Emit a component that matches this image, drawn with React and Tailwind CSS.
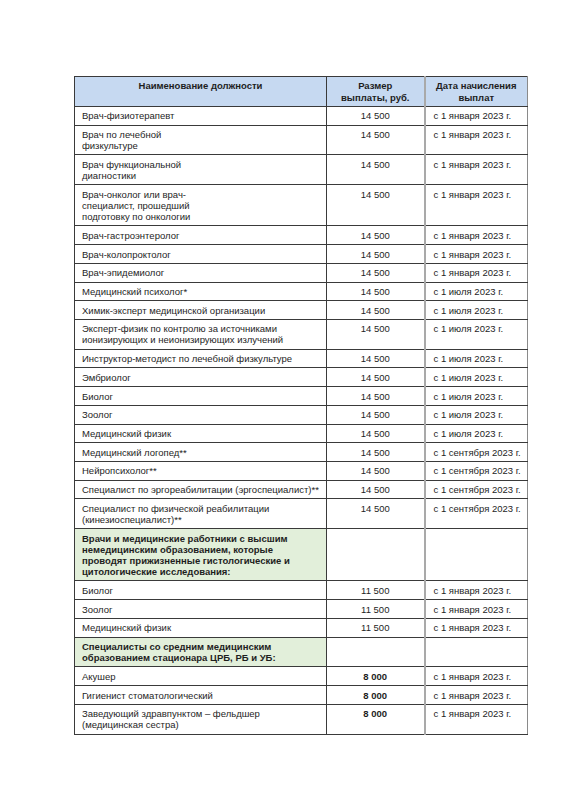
import React from "react";

const rows = [
  { t: ["Врач-физиотерапевт"], v: "14 500", d: "с 1 января 2023 г." },
  { t: ["Врач по лечебной", "физкультуре"], v: "14 500", d: "с 1 января 2023 г." },
  { t: ["Врач функциональной", "диагностики"], v: "14 500", d: "с 1 января 2023 г." },
  { t: ["Врач-онколог или врач-", "специалист, прошедший", "подготовку по онкологии"], v: "14 500", d: "с 1 января 2023 г." },
  { t: ["Врач-гастроэнтеролог"], v: "14 500", d: "с 1 января 2023 г." },
  { t: ["Врач-колопроктолог"], v: "14 500", d: "с 1 января 2023 г." },
  { t: ["Врач-эпидемиолог"], v: "14 500", d: "с 1 января 2023 г." },
  { t: ["Медицинский психолог*"], v: "14 500", d: "с 1 июля 2023 г." },
  { t: ["Химик-эксперт медицинской организации"], v: "14 500", d: "с 1 июля 2023 г." },
  { t: ["Эксперт-физик по контролю за источниками", "ионизирующих и неионизирующих излучений"], v: "14 500", d: "с 1 июля 2023 г." },
  { t: ["Инструктор-методист по лечебной физкультуре"], v: "14 500", d: "с 1 июля 2023 г." },
  { t: ["Эмбриолог"], v: "14 500", d: "с 1 июля 2023 г." },
  { t: ["Биолог"], v: "14 500", d: "с 1 июля 2023 г." },
  { t: ["Зоолог"], v: "14 500", d: "с 1 июля 2023 г." },
  { t: ["Медицинский физик"], v: "14 500", d: "с 1 июля 2023 г." },
  { t: ["Медицинский логопед**"], v: "14 500", d: "с 1 сентября 2023 г." },
  { t: ["Нейропсихолог**"], v: "14 500", d: "с 1 сентября 2023 г." },
  { t: ["Специалист по эргореабилитации (эргоспециалист)**"], v: "14 500", d: "с 1 сентября 2023 г." },
  { t: ["Специалист по физической реабилитации", "(кинезиоспециалист)**"], v: "14 500", d: "с 1 сентября 2023 г." },
  { section: true, t: ["Врачи и медицинские работники с высшим", "немедицинским образованием, которые", "проводят прижизненные гистологические и", "цитологические исследования:"] },
  { t: ["Биолог"], v: "11 500", d: "с 1 января 2023 г." },
  { t: ["Зоолог"], v: "11 500", d: "с 1 января 2023 г." },
  { t: ["Медицинский физик"], v: "11 500", d: "с 1 января 2023 г." },
  { section: true, t: ["Специалисты со средним медицинским", "образованием стационара ЦРБ, РБ и УБ:"] },
  { t: ["Акушер"], v: "8 000", d: "с 1 января 2023 г.", bold: true },
  { t: ["Гигиенист стоматологический"], v: "8 000", d: "с 1 января 2023 г.", bold: true },
  { t: ["Заведующий здравпунктом – фельдшер", "(медицинская сестра)"], v: "8 000", d: "с 1 января 2023 г.", bold: true },
];

const cell = "pt-[3.4px] pb-[3.1px] leading-[11.2px] align-top border-b border-[#3a3a3a]";

export default function App() {
  return (
    <div className="w-[566px] h-[800px] bg-white pt-[76px] pl-[74px]" style={{ fontFamily: '"Liberation Sans", Arial, sans-serif' }}>
      <table className="table-fixed border-collapse w-[453px] text-[9.5px] text-[#1e1e1e]">
        <colgroup>
          <col className="w-[252px]" />
          <col className="w-[98px]" />
          <col className="w-[103px]" />
        </colgroup>
        <thead>
          <tr className="bg-[#c6d9f1]">
            <th className={`${cell} align-middle text-center font-bold border-t border-l border-r border-[#3a3a3a] px-[7px]`}>Наименование должности</th>
            <th className={`${cell} text-center font-bold border-t border-r-2 border-r-[#a9a9a9] border-t-[#3a3a3a]`}>Размер<br />выплаты, руб.</th>
            <th className={`${cell} text-center font-bold border-t border-r border-t-[#3a3a3a] border-r-[#8a8a8a]`}>Дата начисления<br />выплат</th>
          </tr>
        </thead>
        <tbody>
          {rows.map((r, i) => (
            <tr key={i}>
              <td className={`${cell} border-l border-r border-[#3a3a3a] pl-[7px] pr-[4px] ${r.section ? "bg-[#e2efda] font-bold" : ""}`}>
                {r.t.map((l, j) => (
                  <div key={j} className="whitespace-nowrap">{l}</div>
                ))}
              </td>
              <td className={`${cell} border-r-2 border-r-[#a9a9a9] text-center ${r.bold ? "font-bold" : ""}`}>{r.v || "\u00a0"}</td>
              <td className={`${cell} border-r border-r-[#8a8a8a] pl-[8px] whitespace-nowrap`}>{r.d || "\u00a0"}</td>
            </tr>
          ))}
        </tbody>
      </table>
    </div>
  );
}
